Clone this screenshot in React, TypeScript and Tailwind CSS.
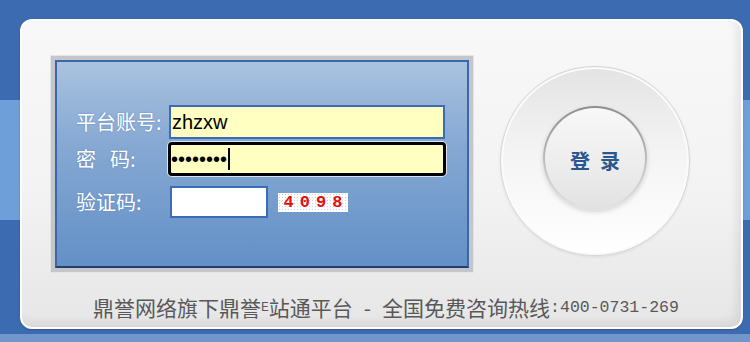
export default function App() {
  return (
    <div className="h-[342px] w-[750px] overflow-hidden bg-[linear-gradient(to_bottom,#3d6bb1_0px,#3d6bb1_100px,#6f9fd8_100px,#6f9fd8_220px,#3d6bb1_220px,#3d6bb1_334px,#7196cb_334px)] pt-[19px] pl-[20px] font-['Noto_Sans_CJK_SC',sans-serif]">
      <div className="flex h-[310px] w-[723px] flex-col rounded-[12px] border-2 border-white bg-[linear-gradient(to_bottom,#f8f8f8,#f3f3f3_55%,#e6e6e6)] pt-[35px] pl-[29px] shadow-[inset_-5px_-5px_9px_rgba(0,0,0,0.07),0_1px_2px_rgba(0,0,0,0.2)]">
        <div className="flex items-start">
          <LoginPanel />
          <LoginButton />
        </div>
        <Footer />
      </div>
    </div>
  );
}

function LoginPanel() {
  return (
    <div className="h-[216px] w-[422px] bg-[#c3c7cb] p-[4px] shadow-[0_0_0_1px_#e2e4e6]">
      <div className="h-full w-full border-2 border-[#3b67a8] border-b-[#223f68] bg-[linear-gradient(to_bottom,#aac2df,#86a9d3_40%,#6390c6)] pt-[43px] pl-[19px]">
        <Row label={<span>平台账号:</span>}>
          <div className="flex h-[34px] w-[276px] items-center border-2 border-[#3b6cb7] bg-[#ffffc2] pl-[1px] font-['Liberation_Sans',sans-serif] text-[20px] leading-none text-black">
            zhzxw
          </div>
        </Row>
        <div className="mt-[3px]">
          <Row label={<span>密<span className="ml-[14px]">码:</span></span>}>
            <div className="-ml-[1px] flex h-[34px] w-[278px] items-center rounded-[4px] border-[3px] border-black bg-[#ffffc2] shadow-[0_0_0_1px_#dde6f0] font-['Liberation_Sans',sans-serif] text-[20px] leading-none text-black">
              <span>••••••••</span>
              <span className="ml-[1px] h-[22px] w-[2px] bg-black" />
            </div>
          </Row>
        </div>
        <div className="mt-[10px]">
          <Row label={<span>验证码:</span>}>
            <div className="flex items-center">
              <div className="ml-[1px] h-[32px] w-[98px] border-2 border-[#3b6cb7] bg-white" />
              <div className="ml-[10px] flex h-[19px] w-[70px] items-center justify-center bg-white bg-[radial-gradient(#c3d4ea_1px,transparent_1px)] bg-[length:3px_3px] font-['Liberation_Mono',monospace] text-[17px] font-bold leading-none tracking-[6px] text-[#e30f0f]">
                <span className="ml-[6px]">4098</span>
              </div>
            </div>
          </Row>
        </div>
      </div>
    </div>
  );
}

function Row({ label, children }: { label: React.ReactNode; children: React.ReactNode }) {
  return (
    <div className="flex items-center">
      <div className="w-[93px] text-[20px] leading-none text-white [text-shadow:0_0_2px_#5d82b8]">{label}</div>
      {children}
    </div>
  );
}

function LoginButton() {
  return (
    <div className="mt-[10px] ml-[27px] flex h-[190px] w-[190px] items-center justify-center rounded-full border border-[#d6d6d6] bg-[linear-gradient(to_bottom,#e3e3e3,#f4f4f4_45%,#ffffff)] shadow-[inset_0_0_0_2px_#fbfbfb,0_1px_3px_rgba(0,0,0,0.08)]">
      <div className="-mt-[6px] rounded-full bg-[linear-gradient(to_bottom,#8d8d8d,#c4c4c4_60%,#e2e2e2)] p-[2px] shadow-[0_2px_5px_rgba(0,0,0,0.15)]">
        <button
          type="button"
          className="flex h-[100px] w-[100px] items-center justify-center rounded-full bg-[linear-gradient(to_bottom,#f8f8f8,#ececec_60%,#e2e2e2)] pt-[6px] text-[20px] font-bold leading-none text-[#2b5790]"
        >
          <span>登</span>
          <span className="ml-[10px]">录</span>
        </button>
      </div>
    </div>
  );
}

function Footer() {
  return (
    <div className="mt-[25px] flex items-center pl-[42px] text-[21px] leading-[21px] text-[#595959]">
      <span>鼎誉网络旗下鼎誉</span>
      <span className="font-['Liberation_Mono',monospace] text-[13px]">E</span>
      <span>站通平台</span>
      <span className="mx-[11px]">-</span>
      <span>全国免费咨询热线</span>
      <span className="font-['Liberation_Mono',monospace] text-[16.5px]">:400-0731-269</span>
    </div>
  );
}
